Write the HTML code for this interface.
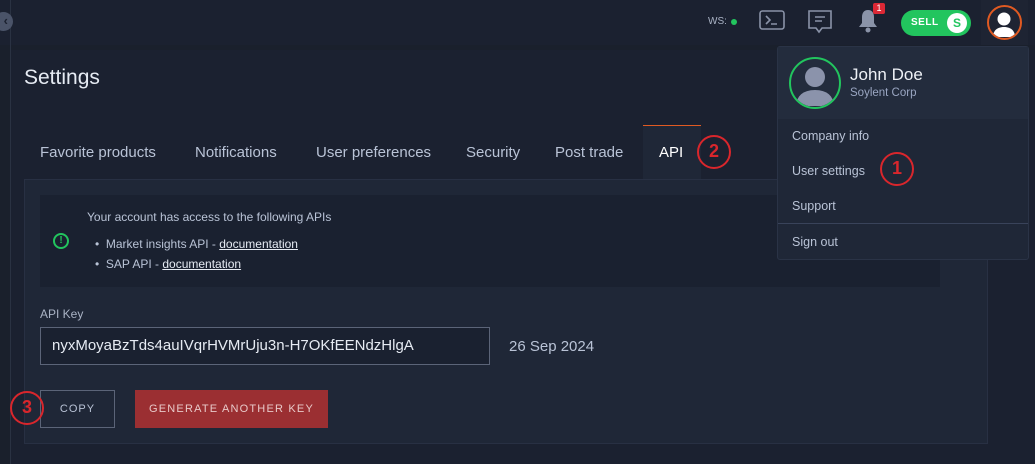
<!DOCTYPE html>
<html><head><style>
*{box-sizing:border-box;margin:0;padding:0}
body{width:1035px;height:464px;background:#1a202c;font-family:"Liberation Sans",sans-serif;position:relative;overflow:hidden;color:#c9d2e3}
.abs{position:absolute}
.top{left:0;top:0;width:1035px;height:45px;background:#1b2130}
.card{left:10px;top:50px;width:1025px;height:414px;background:#1b2130}
.tab{position:absolute;top:144px;font-size:15px;color:#b9c3d6}
.panel{left:24px;top:179px;width:964px;height:265px;background:#1f2737;border:1px solid #283043}
.info{left:40px;top:195px;width:900px;height:92px;background:#1a2130}
.red{border:2.5px solid #d9262c;border-radius:50%;color:#d9262c;font-weight:bold;font-size:18px;text-align:center;width:34px;height:34px;line-height:29px}
.dd{left:777px;top:46px;width:252px;height:214px;background:#1f2737;border:1px solid #2a3346;border-radius:3px}
.ddi{position:absolute;left:14px;font-size:12.5px;color:#b9c3d6}
</style></head><body>
<div class="abs top"></div>
<div class="abs card"></div>
<div class="abs" style="left:10px;top:0;width:1px;height:464px;background:#2a3242"></div>
<div class="abs" style="left:-6px;top:12px;width:19px;height:19px;border-radius:50%;background:#4a5368;color:#1b2130;font-size:13px;line-height:18px;text-align:right;padding-right:5px;font-weight:bold">‹</div>
<div class="abs" style="left:708px;top:16px;font-size:10px;color:#aab3c5">WS:</div>
<div class="abs" style="left:731px;top:19px;width:6px;height:6px;border-radius:50%;background:#22c55e"></div>
<svg class="abs" style="left:759px;top:10px" width="26" height="20"><rect x="1" y="1" width="24" height="18" rx="2.5" fill="none" stroke="#8a93a8" stroke-width="1.6"/><path d="M7 6l4 4-4 4M12 14h6" fill="none" stroke="#8a93a8" stroke-width="1.6"/></svg>
<svg class="abs" style="left:807px;top:9px" width="26" height="26"><path d="M2 2h22v17H15l-3 4-3-4H2z" fill="none" stroke="#8a93a8" stroke-width="1.6"/><path d="M8 8h10M8 12h7" stroke="#8a93a8" stroke-width="1.6"/></svg>
<svg class="abs" style="left:857px;top:8px" width="22" height="26"><path d="M11 2c4 0 6 3 6 7v6l3 4H2l3-4V9c0-4 2-7 6-7z" fill="#8a93a8"/><circle cx="11" cy="22" r="2.5" fill="#8a93a8"/></svg>
<div class="abs" style="left:873px;top:3px;width:12px;height:11px;background:#dc2835;color:#fff;font-size:9px;text-align:center;line-height:11px;border-radius:2px">1</div>
<div class="abs" style="left:901px;top:10px;width:70px;height:26px;border-radius:13px;background:#22c55e"></div>
<div class="abs" style="left:911px;top:17px;color:#fff;font-size:10px;font-weight:bold;letter-spacing:.5px">SELL</div>
<div class="abs" style="left:947px;top:13px;width:20px;height:20px;border-radius:50%;background:#fff;color:#22c55e;font-weight:bold;font-size:12px;text-align:center;line-height:20px">S</div>
<div class="abs" style="left:981px;top:0;width:47px;height:45px;background:#1e2433"></div>
<div class="abs" style="left:987px;top:5px;width:35px;height:35px;border-radius:50%;border:2.5px solid #e05a22;background:#1e2433;overflow:hidden">
<svg width="30" height="30"><circle cx="15" cy="12" r="6.5" fill="#fff"/><path d="M4 30c0-7 5-10 11-10s11 3 11 10z" fill="#fff"/></svg></div>

<div class="abs" style="left:24px;top:66px;font-size:21px;color:#e6ebf3">Settings</div>
<div class="tab" style="left:40px">Favorite products</div>
<div class="tab" style="left:195px">Notifications</div>
<div class="tab" style="left:316px">User preferences</div>
<div class="tab" style="left:466px">Security</div>
<div class="tab" style="left:555px">Post trade</div>
<div class="abs" style="left:643px;top:125px;width:58px;height:55px;background:#1f2737;border-top:1px solid #e05a22"></div>
<div class="tab" style="left:659px;color:#fff">API</div>
<div class="abs red" style="left:697px;top:135px">2</div>
<div class="abs panel"></div>
<div class="abs info"></div>
<div class="abs" style="left:53px;top:233px;width:16px;height:16px;border:2px solid #22c55e;border-radius:50%;color:#22c55e;font-size:10px;font-weight:bold;text-align:center;line-height:12px">!</div>
<div class="abs" style="left:87px;top:210px;font-size:12px;color:#b9c3d6">Your account has access to the following APIs</div>
<div class="abs" style="left:95px;top:237px;font-size:12px;color:#b9c3d6">• &nbsp;Market insights API - <u style="color:#e6ebf3">documentation</u></div>
<div class="abs" style="left:95px;top:257px;font-size:12px;color:#b9c3d6">• &nbsp;SAP API - <u style="color:#e6ebf3">documentation</u></div>
<div class="abs" style="left:40px;top:307px;font-size:12px;color:#aab3c5">API Key</div>
<div class="abs" style="left:40px;top:327px;width:450px;height:38px;border:1px solid #5b6478;background:#1a2130;color:#e6ebf3;font-size:15px;padding:9px 0 0 11px">nyxMoyaBzTds4auIVqrHVMrUju3n-H7OKfEENdzHlgA</div>
<div class="abs" style="left:509px;top:338px;font-size:15px;color:#b9c3d6">26 Sep 2024</div>
<div class="abs" style="left:40px;top:390px;width:75px;height:38px;border:1px solid #5b6478;color:#b9c3d6;font-size:11px;letter-spacing:1px;text-align:center;line-height:36px">COPY</div>
<div class="abs red" style="left:10px;top:391px">3</div>
<div class="abs" style="left:135px;top:390px;width:193px;height:38px;background:#9b2f32;color:#e8c9c9;font-size:11px;letter-spacing:1.2px;text-align:center;line-height:38px">GENERATE ANOTHER KEY</div>

<div class="abs dd">
<div style="height:72px;background:#232c3d"></div>
<div class="abs" style="left:11px;top:10px;width:52px;height:52px;border-radius:50%;border:2px solid #22c55e;overflow:hidden">
<svg width="48" height="48"><circle cx="24" cy="18" r="10" fill="#8b93ab"/><path d="M4 48c0-12 8-18 20-18s20 6 20 18z" fill="#8b93ab" stroke="#232c3d" stroke-width="2"/></svg></div>
<div class="abs" style="left:72px;top:18px;font-size:17px;color:#eef1f6">John Doe</div>
<div class="abs" style="left:72px;top:40px;font-size:11.5px;color:#9aa6c2">Soylent Corp</div>
<div class="ddi" style="top:82px">Company info</div>
<div class="ddi" style="top:117px">User settings</div>
<div class="ddi" style="top:152px">Support</div>
<div class="abs" style="left:0;top:176px;width:250px;height:1px;background:#39435a"></div>
<div class="ddi" style="top:188px">Sign out</div>
</div>
<div class="abs red" style="left:880px;top:152px">1</div>
</body></html>
